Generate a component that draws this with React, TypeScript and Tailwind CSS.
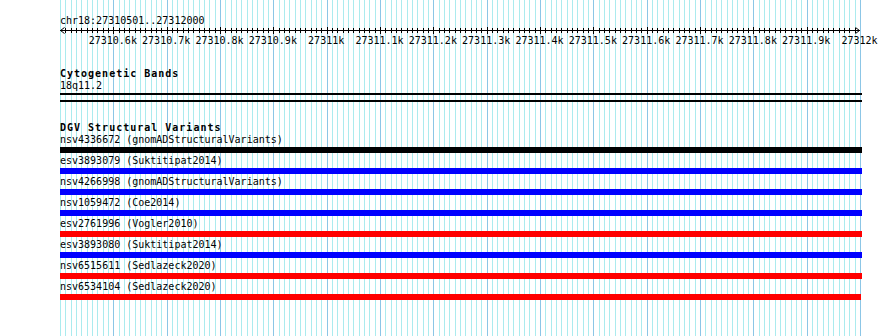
import React from "react";

const MINOR = "#abebee";
const MAJOR = "#8cc6e6";

const rows: { name: string; color: string; w: number }[] = [
  { name: "nsv4336672 (gnomADStructuralVariants)", color: "bg-black", w: 802 },
  { name: "esv3893079 (Suktitipat2014)", color: "bg-[#0000ff]", w: 802 },
  { name: "nsv4266998 (gnomADStructuralVariants)", color: "bg-[#0000ff]", w: 802 },
  { name: "nsv1059472 (Coe2014)", color: "bg-[#0000ff]", w: 802 },
  { name: "esv2761996 (Vogler2010)", color: "bg-[#ff0000]", w: 802 },
  { name: "esv3893080 (Suktitipat2014)", color: "bg-[#0000ff]", w: 802 },
  { name: "nsv6515611 (Sedlazeck2020)", color: "bg-[#ff0000]", w: 802 },
  { name: "nsv6534104 (Sedlazeck2020)", color: "bg-[#ff0000]", w: 801 },
];

const labels = [
  "27310.6k",
  "27310.7k",
  "27310.8k",
  "27310.9k",
  "27311k",
  "27311.1k",
  "27311.2k",
  "27311.3k",
  "27311.4k",
  "27311.5k",
  "27311.6k",
  "27311.7k",
  "27311.8k",
  "27311.9k",
  "27312k",
];

const px = (k: number) => Math.round((800 * k) / 150);

function Grid() {
  const lines = [];
  for (let k = 0; k <= 150; k++) {
    const x = 60 + px(k) + 0.5;
    const isMajor = k % 10 === 0 && k > 0;
    lines.push(
      <line
        key={k}
        x1={x}
        x2={x}
        y1={0}
        y2={336}
        stroke={isMajor ? MAJOR : MINOR}
        strokeWidth={1}
      />
    );
  }
  return (
    <svg
      className="absolute left-0 top-0"
      width={890}
      height={336}
      shapeRendering="crispEdges"
    >
      {lines}
    </svg>
  );
}

function Ruler() {
  const ticks = [];
  for (let k = 1; k < 150; k++) {
    const x = px(k) + 0.5;
    const isMajor = k % 10 === 0;
    ticks.push(
      <line
        key={k}
        x1={x}
        x2={x}
        y1={isMajor ? 0 : 1}
        y2={isMajor ? 7 : 6}
        stroke="#000"
        strokeWidth={1}
      />
    );
  }
  return (
    <svg
      className="block overflow-visible"
      width={802}
      height={20}
      style={{ overflow: "visible" }}
    >
      <g shapeRendering="crispEdges">
        <line x1={0} x2={800} y1={3.5} y2={3.5} stroke="#000" strokeWidth={1} />
        {ticks}
      </g>
      <polyline points="4.5,0.5 0.5,3.5 4.5,6.5" fill="none" stroke="#000" strokeWidth={1} />
      <polyline points="795.5,0.5 799.5,3.5 795.5,6.5" fill="none" stroke="#000" strokeWidth={1} />
      {labels.map((l, i) => (
        <text
          key={l}
          x={(800 * (i + 1)) / 15 - 0.5}
          y={17}
          textAnchor="middle"
          fontFamily="'DejaVu Sans Mono', monospace"
          fontSize={10}
          fill="#000"
        >
          {l}
        </text>
      ))}
    </svg>
  );
}

export default function App() {
  return (
    <div className="relative w-[890px] h-[336px] overflow-hidden bg-white text-black font-['DejaVu_Sans_Mono',monospace] text-[10px]">
      <Grid />
      <div className="relative ml-[60px] w-[802px] flex flex-col pt-[15px]">
        <div className="h-[12px] leading-[12px] whitespace-pre">chr18:27310501..27312000</div>
        <Ruler />
        <div className="h-[21px]" />
        <div className="h-[12px] leading-[12px] font-bold tracking-[1px] whitespace-pre">Cytogenetic Bands</div>
        <div className="h-[12px] leading-[12px] whitespace-pre">18q11.2</div>
        <div className="h-[1px]" />
        <div className="h-[2px] bg-black" />
        <div className="h-[5px]" />
        <div className="h-[2px] bg-black" />
        <div className="h-[20px]" />
        <div className="h-[10px] leading-[12px] font-bold tracking-[1px] whitespace-pre">DGV Structural Variants</div>
        {rows.map((r) => (
          <div key={r.name} className="flex flex-col">
            <div className="h-[15px] leading-[15px] whitespace-pre">{r.name}</div>
            <div className={`h-[6px] ${r.color}`} style={{ width: r.w }} />
          </div>
        ))}
      </div>
    </div>
  );
}
